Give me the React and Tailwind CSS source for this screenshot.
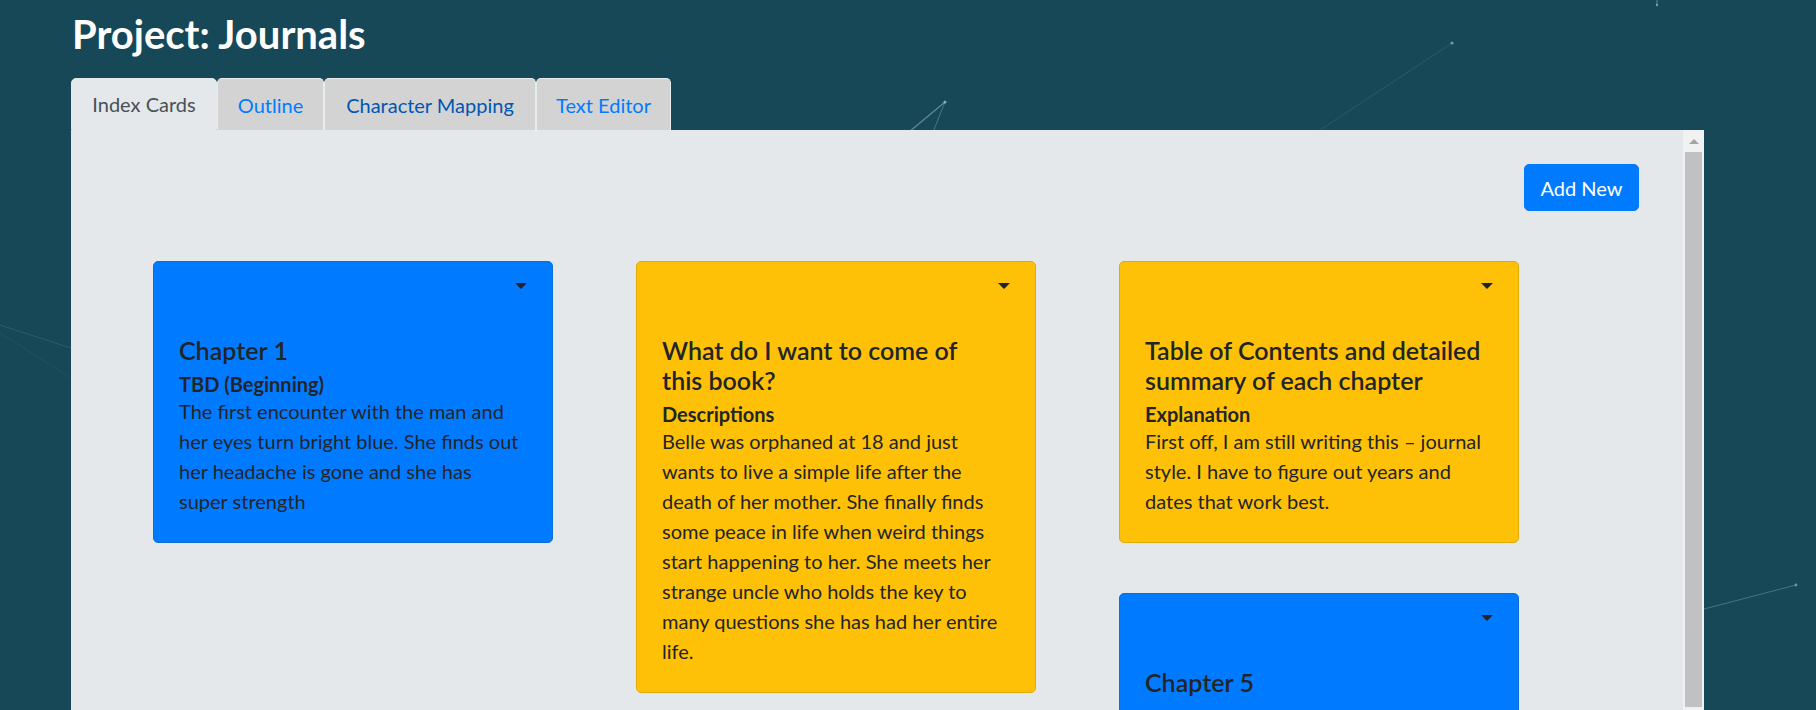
import React from "react";

function Caret() {
  return (
    <div className="flex justify-end pt-[21px]">
      <div className="w-0 h-0 border-t-[6px] border-t-[#212529] border-x-[6px] border-x-transparent" />
    </div>
  );
}

function Card({ color, title, subtitle, lines, extra }) {
  const bg =
    color === "blue"
      ? "bg-[#007bff] border-[#0a6fdc]"
      : "bg-[#ffc107] border-[#e2aa06]";
  return (
    <div className={`w-[400px] border rounded-[5px] px-[25px] pb-[26px] text-[#212529] ${bg} ${extra || ""}`}>
      <Caret />
      <div className="mt-[46px] text-[25px] leading-[30px] font-semibold whitespace-nowrap">
        {title.map((t, i) => (
          <div key={i}>{t}</div>
        ))}
      </div>
      {subtitle && (
        <div className="mt-[7px] text-[20px] leading-[24px] font-bold whitespace-nowrap">{subtitle}</div>
      )}
      {lines && (
        <div className="text-[20px] leading-[30px] whitespace-nowrap">
          {lines.map((t, i) => (
            <div key={i}>{t}</div>
          ))}
        </div>
      )}
    </div>
  );
}

export default function App() {
  return (
    <div className="relative w-[1816px] h-[710px] overflow-hidden bg-[#174857] font-['Lato',sans-serif]">
      <svg className="absolute inset-0" width="1816" height="710">
        <line x1="909" y1="132" x2="945" y2="102" stroke="rgba(190,215,225,0.45)" strokeWidth="1.2" />
        <line x1="933" y1="132" x2="945" y2="102" stroke="rgba(190,215,225,0.3)" strokeWidth="1" />
        <circle cx="945" cy="102" r="1.6" fill="rgba(190,215,225,0.6)" />
        <line x1="1317" y1="132" x2="1452" y2="43" stroke="rgba(190,215,225,0.12)" strokeWidth="1" />
        <circle cx="1452" cy="43" r="1.6" fill="rgba(190,215,225,0.55)" />
        <line x1="1657" y1="0" x2="1657" y2="5" stroke="rgba(190,215,225,0.45)" strokeWidth="1" />
        <circle cx="1657" cy="5" r="1.2" fill="rgba(190,215,225,0.55)" />
        <line x1="0" y1="325" x2="71" y2="348" stroke="rgba(190,215,225,0.14)" strokeWidth="1" />
        <line x1="0" y1="333" x2="71" y2="378" stroke="rgba(190,215,225,0.07)" strokeWidth="1" />
        <line x1="1704" y1="609" x2="1796" y2="585" stroke="rgba(190,215,225,0.3)" strokeWidth="1" />
        <circle cx="1796" cy="585" r="1.4" fill="rgba(190,215,225,0.5)" />
      </svg>

      <div className="relative z-10 flex flex-col pl-[71px]">
        <h2 className="pt-[12px] ml-[1px] text-[40px] leading-[44px] font-bold text-white">Project: Journals</h2>

        <div className="mt-[22px] flex h-[52px] text-[20px] leading-[30px]">
          <div className="w-[146px] flex items-center justify-center rounded-t-[5px] bg-[#e4e8ea] border border-[#e4e8ea] text-[#495057]">
            Index Cards
          </div>
          <div className="w-[107px] flex items-center justify-center rounded-t-[5px] bg-[#d3d3d3] border border-b-0 border-[#e9ecef] text-[#007bff]">
            Outline
          </div>
          <div className="w-[212px] flex items-center justify-center rounded-t-[5px] bg-[#d3d3d3] border border-b-0 border-[#e9ecef] text-[#0056b3]">
            Character Mapping
          </div>
          <div className="w-[135px] flex items-center justify-center rounded-t-[5px] bg-[#d3d3d3] border border-b-0 border-[#e9ecef] text-[#007bff]">
            Text Editor
          </div>
        </div>

        <div className="w-[1633px] h-[580px] flex bg-[#e4e8ea]">
          <div className="flex-1 flex flex-col pt-[34px]">
            <div className="flex justify-end pr-[44px]">
              <button className="w-[115px] h-[47px] rounded-[5px] bg-[#007bff] text-white text-[20px] leading-[30px] border border-[#007bff]">
                Add New
              </button>
            </div>
            <div className="mt-[50px] pl-[82px] flex gap-x-[83px] items-start">
              <div className="flex flex-col gap-[50px]">
                <Card
                  color="blue"
                  title={["Chapter 1"]}
                  subtitle="TBD (Beginning)"
                  lines={[
                    "The first encounter with the man and",
                    "her eyes turn bright blue. She finds out",
                    "her headache is gone and she has",
                    "super strength",
                  ]}
                />
              </div>
              <div className="flex flex-col gap-[50px]">
                <Card
                  color="yellow"
                  title={["What do I want to come of", "this book?"]}
                  subtitle="Descriptions"
                  lines={[
                    "Belle was orphaned at 18 and just",
                    "wants to live a simple life after the",
                    "death of her mother. She finally finds",
                    "some peace in life when weird things",
                    "start happening to her. She meets her",
                    "strange uncle who holds the key to",
                    "many questions she has had her entire",
                    "life.",
                  ]}
                />
              </div>
              <div className="flex flex-col gap-[50px]">
                <Card
                  color="yellow"
                  title={["Table of Contents and detailed", "summary of each chapter"]}
                  subtitle="Explanation"
                  lines={[
                    "First off, I am still writing this \u2013 journal",
                    "style. I have to figure out years and",
                    "dates that work best.",
                  ]}
                />
                <Card color="blue" title={["Chapter 5"]} extra="min-h-[200px]" />
              </div>
            </div>
          </div>
          <div className="w-[21px] flex flex-col bg-[#f1f1f1]">
            <div className="h-[22px] flex items-center justify-center">
              <div className="w-0 h-0 border-b-[5px] border-b-[#a3a3a3] border-x-[5px] border-x-transparent" />
            </div>
            <div className="flex-1 mx-[2px] mb-[3px] bg-[#c1c1c1]" />
          </div>
        </div>
      </div>
    </div>
  );
}
